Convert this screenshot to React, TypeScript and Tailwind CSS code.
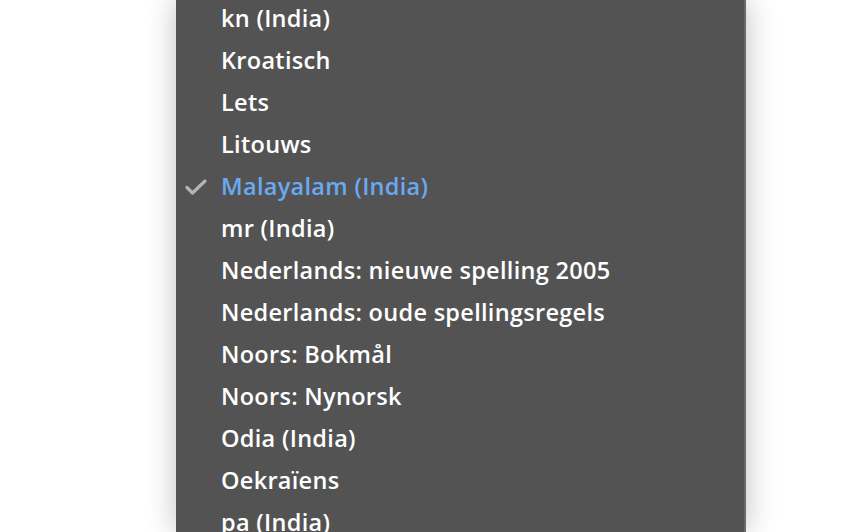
const ITEMS = [
  "kn (India)",
  "Kroatisch",
  "Lets",
  "Litouws",
  "Malayalam (India)",
  "mr (India)",
  "Nederlands: nieuwe spelling 2005",
  "Nederlands: oude spellingsregels",
  "Noors: Bokmål",
  "Noors: Nynorsk",
  "Odia (India)",
  "Oekraïens",
  "pa (India)",
];

const SELECTED = "Malayalam (India)";

export default function App() {
  return (
    <div className="h-[532px] w-[844px] overflow-hidden bg-white">
      <div className="ml-[176px] h-[532px] w-[570px] overflow-hidden border-r-2 border-[#6a6a6a] bg-[#535353] shadow-[0_0_28px_rgba(0,0,0,0.25)]">
        <ul className="-mt-[2px] flex flex-col">
          {ITEMS.map((item) => {
            const selected = item === SELECTED;
            return (
              <li
                key={item}
                className="flex h-[42px] items-center font-['Open_Sans',sans-serif] text-[23.5px] font-semibold tracking-[0.3px]"
              >
                <span className="flex w-[45px] justify-start pl-[9px]">
                  {selected && (
                    <svg width="22" height="16" viewBox="0 0 22 16" fill="none">
                      <path
                        d="M2 8.5l5.5 5.5L20 2"
                        stroke="#b4b4b4"
                        strokeWidth="3.2"
                        strokeLinecap="round"
                        strokeLinejoin="round"
                      />
                    </svg>
                  )}
                </span>
                <span className={selected ? "text-[#6aa9f2]" : "text-white"}>
                  {item}
                </span>
              </li>
            );
          })}
        </ul>
      </div>
    </div>
  );
}
